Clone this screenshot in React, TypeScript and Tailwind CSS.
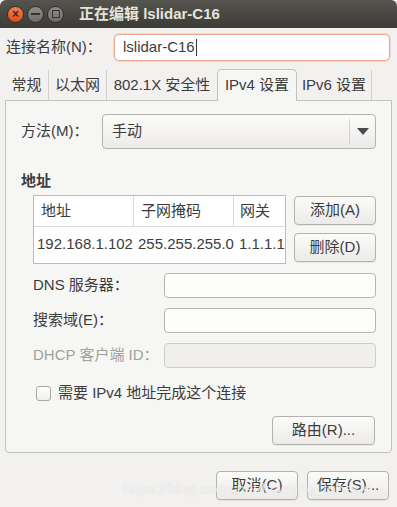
import React from 'react';

const font = { fontFamily: '"Liberation Sans", "Noto Sans CJK SC", sans-serif' };

function Btn({ children, className = '' }: { children: React.ReactNode; className?: string }) {
  return (
    <div className={`flex items-center justify-center rounded-[4px] border border-[#b4b2ad] bg-gradient-to-b from-[#fbfbfa] to-[#ecebe9] text-[15px] text-[#3c3c3c] shadow-[0_1px_0_rgba(0,0,0,0.06)] whitespace-nowrap ${className}`}>
      {children}
    </div>
  );
}

function Field({ className = '', disabled = false }: { className?: string; disabled?: boolean }) {
  return (
    <div className={`rounded-[4px] border ${disabled ? 'border-[#cfcdc9] bg-[#f0efed]' : 'border-[#b8b6b1] bg-[#fdfdfc]'} ${className}`} />
  );
}

const tabs = [
  { label: '常规', w: 'w-[44px]' },
  { label: '以太网', w: 'w-[58px]' },
  { label: '802.1X 安全性', w: 'w-[110px]' },
  { label: 'IPv4 设置', w: 'w-[80px]' },
  { label: 'IPv6 设置', w: 'w-[75px]' },
];

export default function App() {
  return (
    <div className="w-[397px] h-[507px] bg-[#f2f1f0] text-[#3c3c3c] flex flex-col relative overflow-hidden" style={font}>
      {/* title bar */}
      <div className="h-[28px] flex items-center rounded-t-[6px] bg-gradient-to-b from-[#55544f] to-[#3c3b37] px-[7px]">
        <div className="flex items-center gap-[3px]">
          <div className="w-[17px] h-[17px] rounded-full bg-gradient-to-b from-[#f47f50] to-[#df4a16] border border-[#3a2a22] flex items-center justify-center text-[#3a2a22] text-[12px] font-bold leading-none">×</div>
          <div className="w-[17px] h-[17px] rounded-full bg-gradient-to-b from-[#8f8e89] to-[#6d6c68] border border-[#2e2d2a] flex items-center justify-center">
            <div className="w-[9px] h-[2px] bg-[#34332f]" />
          </div>
          <div className="w-[17px] h-[17px] rounded-full bg-gradient-to-b from-[#8f8e89] to-[#6d6c68] border border-[#2e2d2a] flex items-center justify-center">
            <div className="w-[8px] h-[8px] border-[1.5px] border-[#34332f]" />
          </div>
        </div>
        <div className="ml-[15px] font-bold text-[15px] text-[#e6e3dc] whitespace-nowrap">正在编辑 lslidar-C16</div>
      </div>

      {/* connection name */}
      <div className="flex items-center mt-[6px] pl-[6px] pr-[7px]">
        <div className="w-[108px] text-[15px] whitespace-nowrap">连接名称(N)：</div>
        <div className="flex-1 h-[27px] rounded-[5px] border border-[#eda58a] bg-white flex items-center pl-[8px] text-[15px] shadow-[0_0_0_1px_rgba(240,150,110,0.25)]">
          lslidar-C16<span className="w-px h-[17px] bg-[#333] ml-px" />
        </div>
      </div>

      {/* tabs */}
      <div className="mt-[7px] mx-[5px] flex items-end h-[32px]">
        {tabs.map((t, i) =>
          i === 3 ? (
            <div key={t.label} className={`${t.w} flex-none h-[32px] flex items-center justify-center rounded-t-[5px] border border-b-0 border-[#c4c2bd] bg-[#f6f6f5] text-[15px] whitespace-nowrap relative top-px z-10`}>{t.label}</div>
          ) : (
            <div key={t.label} className={`${t.w} flex-none h-[30px] flex items-center justify-center text-[15px] whitespace-nowrap ${i < 2 || i === 4 ? 'border-r border-[#d2d0cb]' : ''}`}>{t.label}</div>
          )
        )}
      </div>

      {/* panel */}
      <div className="mx-[5px] h-[353px] border border-[#c4c2bd] rounded-b-[4px] bg-[#f6f6f5] flex flex-col">
        <div className="flex items-center mt-[13px] pl-[15px]">
          <div className="w-[81px] text-[15px] whitespace-nowrap">方法(M)：</div>
          <div className="w-[274px] h-[35px] rounded-[4px] border border-[#b4b2ad] bg-gradient-to-b from-[#fbfbfa] to-[#ecebe9] flex items-center">
            <div className="flex-1 pl-[9px] text-[15px]">手动</div>
            <div className="w-px h-[26px] bg-[#d2d0cb]" />
            <div className="w-[25px] flex justify-center">
              <div className="w-0 h-0 border-l-[6px] border-r-[6px] border-t-[7px] border-l-transparent border-r-transparent border-t-[#4a4a4a]" />
            </div>
          </div>
        </div>

        <div className="mt-[22px] pl-[15px] text-[15px] font-bold leading-[20px]">地址</div>

        <div className="flex mt-[4px] pl-[27px]">
          <div className="w-[253px] h-[69px] border border-[#bdbbb6] bg-white text-[15px]">
            <div className="flex h-[31px] border-b border-[#dcdad6] items-center">
              <div className="w-[100px] h-full flex items-center pl-[7px] border-r border-[#dcdad6]">地址</div>
              <div className="w-[100px] h-full flex items-center pl-[7px] border-r border-[#dcdad6]">子网掩码</div>
              <div className="flex-1 pl-[6px]">网关</div>
            </div>
            <div className="flex pt-[6px] text-[15px] whitespace-nowrap">
              <span className="w-[100px] pl-[3px]">192.168.1.102</span>
              <span className="w-[100px] pl-[4px]">255.255.255.0</span>
              <span className="pl-[5px]">1.1.1.1</span>
            </div>
          </div>
          <div className="ml-[8px] flex flex-col gap-[8px] pt-px">
            <Btn className="w-[82px] h-[29px]">添加(A)</Btn>
            <Btn className="w-[82px] h-[29px]">删除(D)</Btn>
          </div>
        </div>

        <div className="mt-[9px] flex flex-col gap-[10px] pl-[27px]">
          <div className="flex items-center">
            <div className="w-[131px] text-[15px] whitespace-nowrap">DNS 服务器：</div>
            <Field className="w-[212px] h-[25px]" />
          </div>
          <div className="flex items-center">
            <div className="w-[131px] text-[15px] whitespace-nowrap">搜索域(E)：</div>
            <Field className="w-[212px] h-[25px]" />
          </div>
          <div className="flex items-center">
            <div className="w-[131px] text-[15px] text-[#a2a09b] whitespace-nowrap">DHCP 客户端 ID：</div>
            <Field disabled className="w-[212px] h-[25px]" />
          </div>
        </div>

        <div className="flex items-center mt-[14px] pl-[30px]">
          <div className="w-[15px] h-[15px] rounded-[3px] border border-[#a9a7a2] bg-gradient-to-b from-white to-[#efeeec]" />
          <div className="ml-[7px] text-[15px] whitespace-nowrap">需要 IPv4 地址完成这个连接</div>
        </div>

        <div className="flex justify-end pr-[16px] mt-[11px]">
          <Btn className="w-[103px] h-[29px]">路由(R)...</Btn>
        </div>
      </div>

      {/* dialog buttons */}
      <div className="flex justify-end gap-[9px] pr-[8px] mt-[18px]">
        <Btn className="w-[82px] h-[29px]">取消(C)</Btn>
        <Btn className="w-[82px] h-[29px]">保存(S)...</Btn>
      </div>

      <div aria-hidden="true" className="absolute left-[123px] top-[478px] text-[15px] text-white/80 pointer-events-none whitespace-nowrap [text-shadow:0_0_1px_rgba(0,0,0,0.2)]">https://blog.csdn.net/learning_tobesie</div>
    </div>
  );
}
